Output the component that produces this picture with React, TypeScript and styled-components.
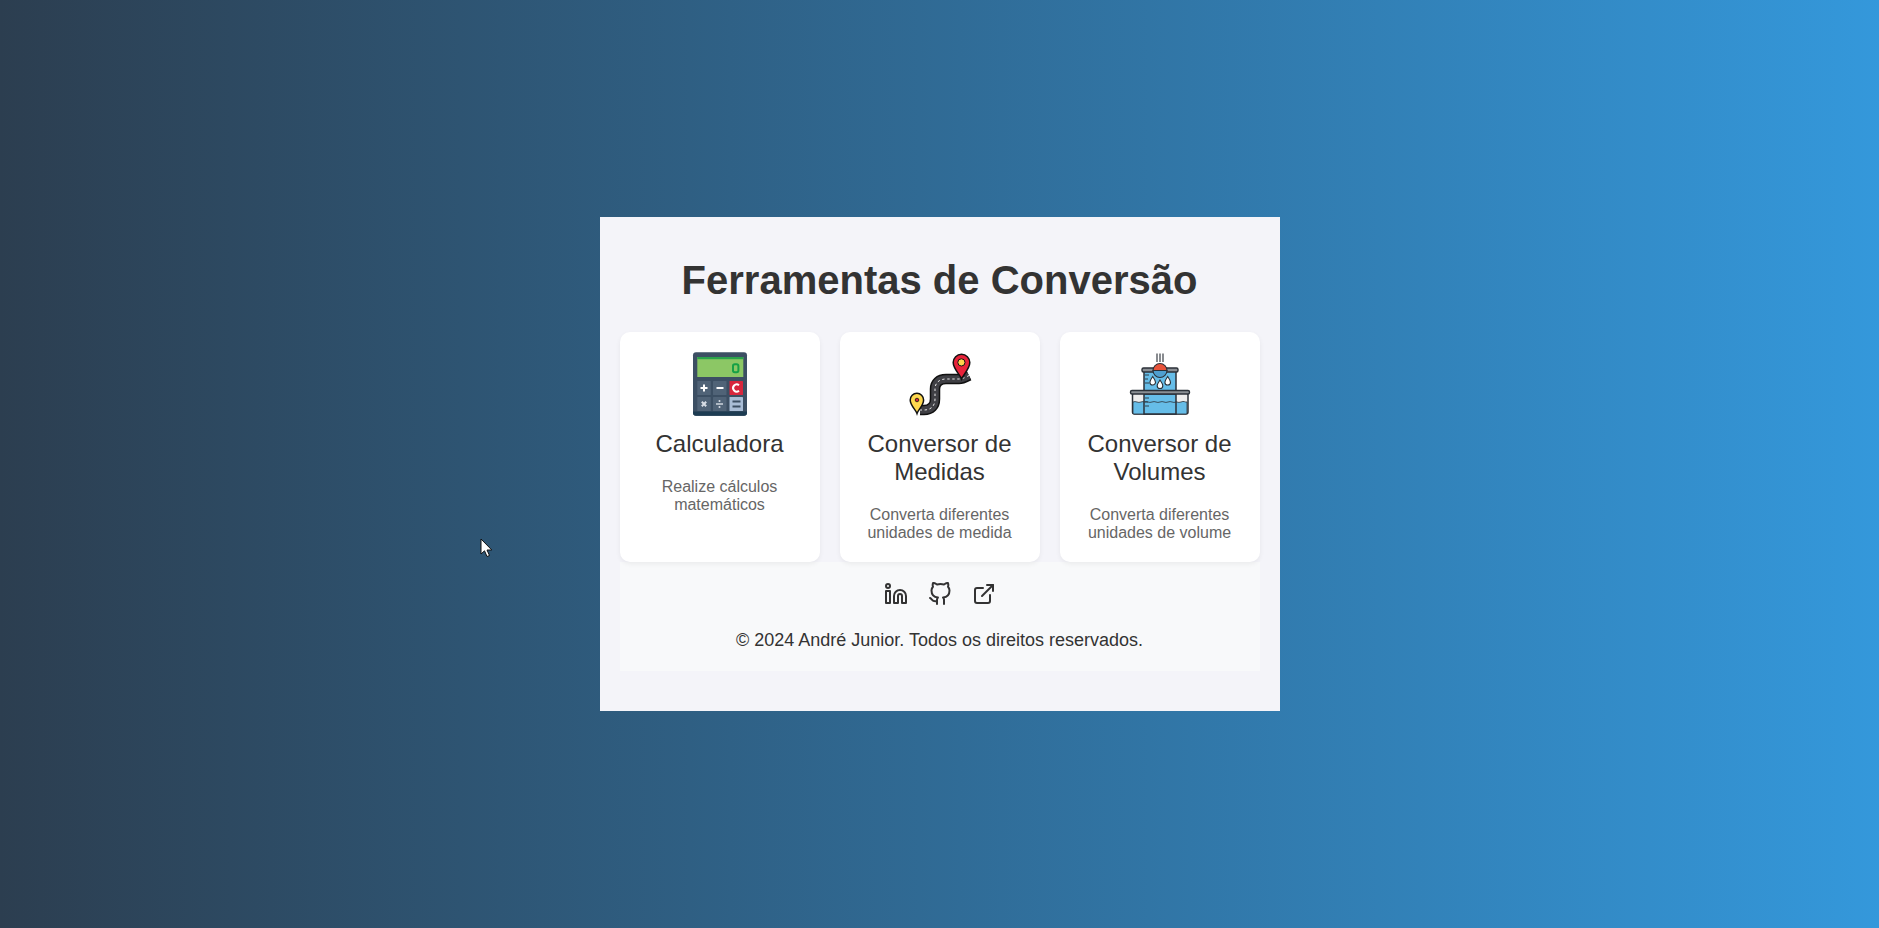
import React from "react";
import styled, { createGlobalStyle } from "styled-components";
import { FiExternalLink, FiGithub, FiLinkedin } from "react-icons/fi";

const GlobalStyle = createGlobalStyle`
  html, body {
    margin: 0;
    height: 100%;
  }
  body {
    font-family: "Liberation Sans", Arial, sans-serif;
    color: #333;
  }
`;

const Page = styled.div`
  position: relative;
  height: 928px;
  display: flex;
  align-items: center;
  justify-content: center;
  background: linear-gradient(to right, #2c3e50, #3498db);
`;
const Panel = styled.main`
  width: 680px;
  box-sizing: border-box;
  padding: 20px 20px 40px;
  background-color: #f4f4f9;
  text-align: center;
`;
const Title = styled.h1`
  margin: 20px 0 29px;
  font-size: 40px;
  line-height: 46px;
  font-weight: 700;
  color: #333;
`;
const Cards = styled.section`
  display: flex;
  gap: 20px;
`;
const Card = styled.a`
  flex: 1;
  box-sizing: border-box;
  min-height: 230px;
  padding: 20px;
  background-color: #fff;
  border-radius: 10px;
  box-shadow: 0 2px 5px rgba(0, 0, 0, 0.06);
  color: #333;
  cursor: pointer;
`;
const CardIcon = styled.svg`
  display: block;
  width: 64px;
  height: 64px;
  margin: 0 auto;
`;
const CardTitle = styled.h2`
  margin: 14px 0 20px;
  font-size: 24px;
  line-height: 28px;
  font-weight: 400;
`;
const CardText = styled.p`
  margin: 0;
  font-size: 16px;
  line-height: 18px;
  color: #666;
`;
const Footer = styled.footer`
  padding: 20px 20px 21px;
  background-color: #f8f9fa;
`;
const Socials = styled.div`
  display: flex;
  justify-content: center;
  gap: 20px;
  color: #333;
`;
const Copyright = styled.p`
  margin: 24px 0 0;
  font-size: 18px;
  line-height: 20px;
  color: #333;
`;
const Cursor = styled.svg`
  position: absolute;
  left: 480px;
  top: 538px;
  width: 13px;
  height: 20px;
`;

const Key = ({ x, y, w = 13.5, h = 14, fill = "#506377" }: { x: number; y: number; w?: number; h?: number; fill?: string }) => (
  <rect x={x} y={y} width={w} height={h} fill={fill} rx="0.6" />
);

const CalculatorIcon = () => (
  <CardIcon viewBox="0 0 64 64">
    <rect x="5" y="0.3" width="54" height="63.4" rx="3" fill="#3c4f63" />
    <path d="M5 59.5h54v1.2a3 3 0 0 1-3 3H8a3 3 0 0 1-3-3z" fill="#1d3c52" />
    <rect x="9.3" y="5" width="46" height="20" fill="#8cc765" />
    <rect x="9.3" y="5" width="46" height="2.2" fill="#2aa24a" />
    <rect x="45" y="12.3" width="5.4" height="8" rx="1.8" fill="none" stroke="#16a046" strokeWidth="2" />
    <Key x={9.3} y={29} />
    <Key x={25} y={29} />
    <Key x={41.5} y={29} fill="#d7263d" />
    <Key x={9.3} y={45} />
    <Key x={25} y={45} />
    <Key x={41.5} y={45} fill="#a9bdd6" />
    <path d="M12.5 36h7M16 32.5v7M28.5 36h7" stroke="#fff" strokeWidth="2" />
    <path d="M51 33.2a3.6 3.6 0 1 0 0 5.6" fill="none" stroke="#fff" strokeWidth="2" />
    <path d="M13.8 49.8l4.4 4.4M18.2 49.8l-4.4 4.4" stroke="#d8dee6" strokeWidth="2" />
    <path d="M28 52h7" stroke="#d8dee6" strokeWidth="1.4" />
    <circle cx="31.5" cy="49" r="1" fill="#d8dee6" />
    <circle cx="31.5" cy="55" r="1" fill="#d8dee6" />
    <path d="M44.5 49.5h8M44.5 54.5h8" stroke="#3c4f63" strokeWidth="2" />
  </CardIcon>
);

const roadPath = "M61 23.500c-2 1-6 3.500-10 3.500H38c-7 0-11 4-11 10v10c0 7-4 11-11 11h-4";

const RoadIcon = () => (
  <CardIcon viewBox="0 0 64 64">
    <path d={roadPath} fill="none" stroke="#111" strokeWidth="10.500" />
    <path d={roadPath} fill="none" stroke="#3f3f44" strokeWidth="7.500" />
    <path d={roadPath} fill="none" stroke="#e8e8e8" strokeWidth="1" strokeDasharray="2.400 2.600" />
    <path d="M53.600 27c-1.600-4.400-8.400-10-8.400-16.400a8.300 8.300 0 0 1 16.600 0c0 6.400-6.600 12-8.200 16.400z" fill="#e8233a" stroke="#111" strokeWidth="1.500" />
    <circle cx="53.400" cy="10.400" r="3.600" fill="#ffd44d" stroke="#111" strokeWidth="1" />
    <path d="M9 61.500c-1.200-3.800-6.800-8-6.800-13.500a6.700 6.700 0 0 1 13.400 0c0 5.500-5.400 9.700-6.600 13.500z" fill="#ffd84f" stroke="#111" strokeWidth="1.500" />
    <circle cx="9" cy="48" r="1.800" fill="#d8263c" stroke="#111" strokeWidth="0.800" />
  </CardIcon>
);

const Drop = ({ x, y }: { x: number; y: number }) => (
  <path
    d={`M${x} ${y - 4.4}c1.700 2.600 2.800 3.900 2.800 5.600a2.800 2.800 0 0 1-5.600 0c0-1.700 1.100-3 2.800-5.600z`}
    fill="#fff"
    stroke="#2b3138"
    strokeWidth="1.100"
  />
);

const VolumeIcon = () => (
  <CardIcon viewBox="0 0 64 64">
    <path d="M29 1.500v8.500M32 1.500v8.500M35 1.500v8.500" stroke="#4a4f55" strokeWidth="1.300" />
    <rect x="16" y="19" width="32" height="20" fill="#66bde8" stroke="#2b3138" strokeWidth="1.500" />
    <rect x="14" y="16" width="36" height="4" rx="1.500" fill="#8a8f94" stroke="#2b3138" strokeWidth="1.400" />
    <path d="M25 18.500a7 7 0 0 1 14 0z" fill="#e8533a" stroke="#2b3138" strokeWidth="1.100" />
    <path d="M25 18.500h14a7 7 0 0 1-14 0z" fill="#4f9fcf" stroke="#2b3138" strokeWidth="1.100" />
    <path d="M17 23h4M17 27h3M17 31h4" stroke="#2b3138" strokeWidth="0.900" />
    <Drop x={24.700} y={29} />
    <Drop x={32} y={32.500} />
    <Drop x={39.700} y={29} />
    <rect x="4.500" y="41" width="55.500" height="21" rx="2" fill="#ededed" stroke="#2b3138" strokeWidth="1.500" />
    <path d="M5 50c3-1.500 5 1.500 8 0s5 1.500 8 0 5 1.500 8 0 5 1.500 8 0 5 1.500 8 0 5 1.500 8 0 4 .500 6 0V61a1 1 0 0 1-1 1H6a1 1 0 0 1-1-1z" fill="#66bde8" stroke="#2b3138" strokeWidth="0.800" />
    <rect x="16" y="42" width="32" height="20" fill="#66bde8" stroke="#2b3138" strokeWidth="1.500" />
    <path d="M16 50c3-1.500 5 1.500 8 0s5 1.500 8 0 5 1.500 8 0 5 1.500 8 0" fill="none" stroke="#2b3138" strokeWidth="0.800" />
    <path d="M17 46h4M17 50h3M17 54h4" stroke="#2b3138" strokeWidth="0.900" />
    <rect x="2.500" y="38.500" width="59" height="3.500" rx="1.500" fill="#8a8f94" stroke="#2b3138" strokeWidth="1.400" />
  </CardIcon>
);

export default function App() {
  return (
    <Page>
      <GlobalStyle />
      <Panel>
        <Title>Ferramentas de Conversão</Title>
        <Cards>
          <Card>
            <CalculatorIcon />
            <CardTitle>Calculadora</CardTitle>
            <CardText>Realize cálculos matemáticos</CardText>
          </Card>
          <Card>
            <RoadIcon />
            <CardTitle>Conversor de Medidas</CardTitle>
            <CardText>Converta diferentes unidades de medida</CardText>
          </Card>
          <Card>
            <VolumeIcon />
            <CardTitle>Conversor de Volumes</CardTitle>
            <CardText>Converta diferentes unidades de volume</CardText>
          </Card>
        </Cards>
        <Footer>
          <Socials>
            <FiLinkedin size={24} />
            <FiGithub size={24} />
            <FiExternalLink size={24} />
          </Socials>
          <Copyright>© 2024 André Junior. Todos os direitos reservados.</Copyright>
        </Footer>
      </Panel>
      <Cursor viewBox="0 0 13 20">
        <path d="M1 1v15l3.500-3.200 2.500 5.700 2.500-1-2.500-5.500h4.800z" fill="#fff" stroke="#111" strokeWidth="1" />
      </Cursor>
    </Page>
  );
}
